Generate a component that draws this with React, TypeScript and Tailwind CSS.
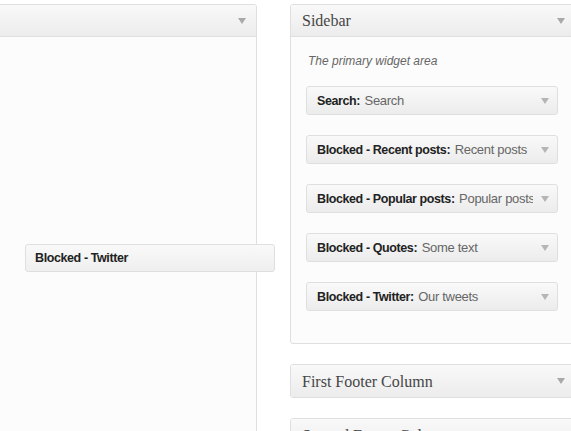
import React from "react";

const Arrow = ({ color = "#a9a9a9" }: { color?: string }) => (
  <svg width="8" height="6" viewBox="0 0 8 6" className="block">
    <path d="M0 0 L8 0 L4 6 Z" fill={color} />
  </svg>
);

const Widget = ({ name, title }: { name: string; title: string }) => (
  <div className="h-[29px] mb-[20px] border border-[#dfdfdf] rounded-[3px] bg-gradient-to-b from-[#f9f9f9] to-[#ececec] flex items-center">
    <div className="flex-1 min-w-0 overflow-hidden whitespace-nowrap pl-[10px] leading-[16px]">
      <span className="font-bold text-[12.5px] tracking-[-0.4px] text-[#222]">{name}:</span>{" "}
      <span className="text-[13px] tracking-[-0.3px] text-[#666]">{title}</span>
    </div>
    <div className="w-[24px] shrink-0 flex justify-center pt-[1px]">
      <Arrow color="#b5b5b5" />
    </div>
  </div>
);

const Header = ({ title, withBorder = true }: { title?: string; withBorder?: boolean }) => (
  <div
    className={`h-[32px] flex items-center justify-between pl-[11px] pr-[10px] bg-gradient-to-b from-[#f9f9f9] to-[#ececec] ${
      withBorder ? "border-b border-[#dfdfdf]" : ""
    }`}
  >
    <span
      className="text-[16px] text-[#464646] leading-[20px] whitespace-nowrap pt-[1px]"
      style={{ fontFamily: '"Liberation Serif", serif' }}
    >
      {title}
    </span>
    <Arrow />
  </div>
);

export default function App() {
  return (
    <div
      className="relative w-[571px] h-[431px] overflow-hidden bg-white"
      style={{ fontFamily: '"Liberation Sans", Arial, sans-serif' }}
    >
      <div className="flex items-start pt-[4px] ml-[-29px] gap-[33px]">
        <div className="w-[286px] shrink-0 h-[460px] border border-[#dfdfdf] rounded-t-[3px] overflow-hidden bg-[#fcfcfc]">
          <Header />
        </div>
        <div className="w-[286px] shrink-0 flex flex-col gap-[20px]">
          <div className="border border-[#dfdfdf] rounded-[3px] overflow-hidden bg-[#fcfcfc]">
            <Header title="Sidebar" />
            <div className="pt-[16px] pb-[12px] pl-[15px] pr-[17px]">
              <p className="h-[16px] mb-[17px] pl-[2px] text-[12px] leading-[16px] italic text-[#666]">
                The primary widget area
              </p>
              <Widget name="Search" title="Search" />
              <Widget name="Blocked - Recent posts" title="Recent posts" />
              <Widget name="Blocked - Popular posts" title="Popular posts" />
              <Widget name="Blocked - Quotes" title="Some text" />
              <Widget name="Blocked - Twitter" title="Our tweets" />
            </div>
          </div>
          <div className="border border-[#dfdfdf] rounded-[3px] overflow-hidden">
            <Header title="First Footer Column" withBorder={false} />
          </div>
          <div className="border border-[#dfdfdf] rounded-[3px] overflow-hidden">
            <Header title="Second Footer Column" withBorder={false} />
          </div>
        </div>
      </div>

      <div className="absolute left-[25px] top-[244px] w-[250px] h-[28px] border border-[#dfdfdf] rounded-[3px] bg-gradient-to-b from-[#f9f9f9] to-[#efefef] flex items-center pl-[9px] text-[12.5px] tracking-[-0.4px] font-bold text-[#222]">
        Blocked - Twitter
      </div>
    </div>
  );
}
